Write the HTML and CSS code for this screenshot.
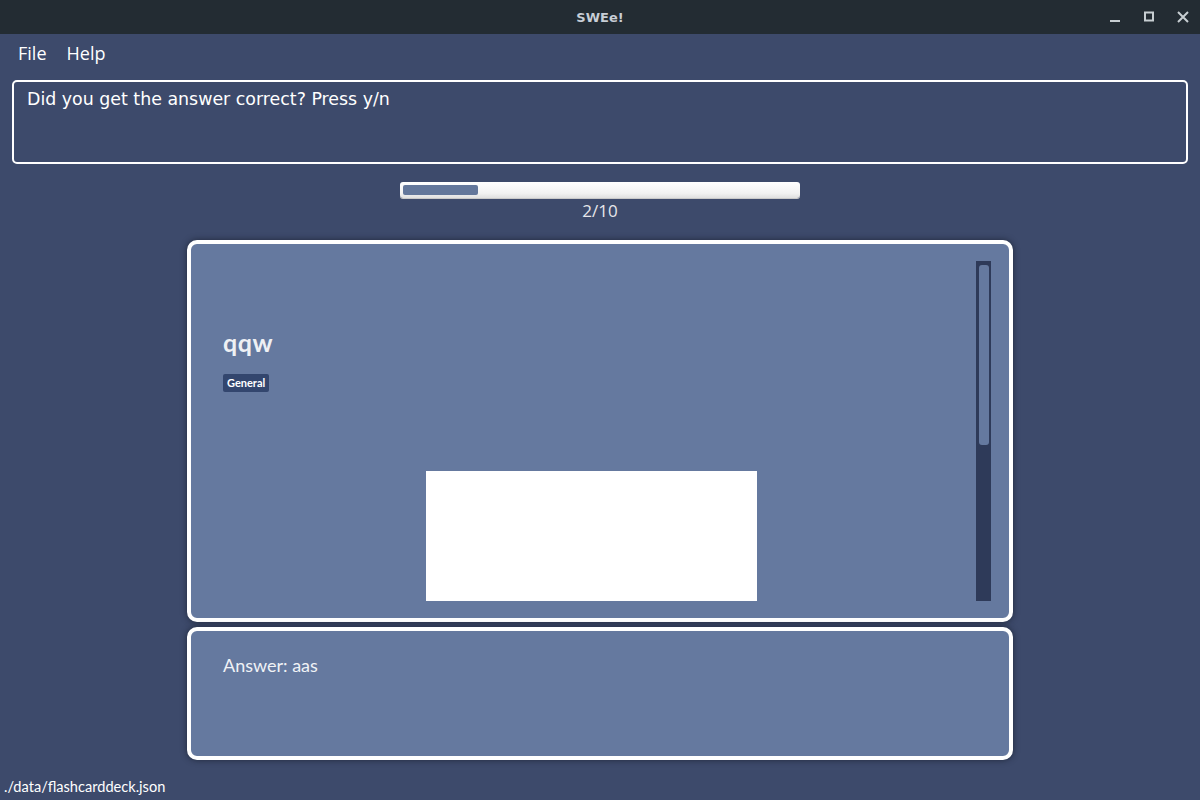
FILE: index.html
```html
<!DOCTYPE html>
<html>
<head>
<meta charset="utf-8">
<link rel="stylesheet" href="styles.css">
</head>
<body>
<div class="window">
  <header class="titlebar">
    <span class="title">SWEe!</span>
    <div class="controls">
      <svg class="ctl" width="14" height="14" viewBox="0 0 14 14"><rect x="2" y="10" width="10" height="2" fill="#c7ced2"/></svg>
      <svg class="ctl" width="14" height="14" viewBox="0 0 14 14"><rect x="3" y="2.5" width="8" height="8" fill="none" stroke="#c7ced2" stroke-width="2"/></svg>
      <svg class="ctl" width="14" height="14" viewBox="0 0 14 14"><path d="M2 2 L12 12 M12 2 L2 12" stroke="#c7ced2" stroke-width="2"/></svg>
    </div>
  </header>
  <nav class="menubar">
    <span class="menu-item">File</span>
    <span class="menu-item">Help</span>
  </nav>
  <div class="command-box">Did you get the answer correct? Press y/n</div>
  <div class="progress-wrap">
    <div class="progress"><div class="progress-fill" style="width: 19%"></div></div>
    <div class="progress-label">2/10</div>
  </div>
  <main class="cards">
    <section class="card question-card">
      <div class="card-content">
        <div class="question">qqw</div>
        <div class="tags"><span class="tag">General</span></div>
        <div class="image-box"></div>
      </div>
      <div class="scrollbar"><div class="thumb"></div></div>
    </section>
    <section class="card answer-card">
      <div class="answer">Answer: aas</div>
    </section>
  </main>
  <footer class="status">./data/flashcarddeck.json</footer>
</div>
</body>
</html>
```
FILE: styles.css
```css
html, body {
  margin: 0;
  padding: 0;
}
body {
  width: 1200px;
  height: 800px;
  overflow: hidden;
  background: #3d4a6b;
}
.window {
  display: flex;
  flex-direction: column;
  height: 800px;
}
.titlebar {
  height: 34px;
  background: #232c33;
  display: flex;
  align-items: center;
  justify-content: center;
  position: relative;
}
.title {
  font-family: "DejaVu Sans", sans-serif;
  font-weight: bold;
  font-size: 13px;
  color: #c7ced6;
}
.controls {
  position: absolute;
  right: 10px;
  top: 10px;
  display: flex;
  gap: 20px;
}
.ctl { display: block; }
.menubar {
  height: 38px;
  display: flex;
  align-items: center;
  padding-left: 18px;
  gap: 20px;
}
.menu-item {
  font-family: "Open Sans", sans-serif;
  font-size: 18px;
  color: #ffffff;
}
.command-box {
  margin: 8px 12px 0;
  height: 84px;
  box-sizing: border-box;
  border: 2px solid #ffffff;
  border-radius: 5px;
  padding: 6px 13px;
  font-family: "DejaVu Sans", sans-serif;
  font-size: 17.4px;
  color: #ffffff;
  line-height: 22px;
}
.progress-wrap {
  margin-top: 18px;
  display: flex;
  flex-direction: column;
  align-items: center;
}
.progress {
  width: 400px;
  height: 16px;
  box-sizing: border-box;
  background: linear-gradient(#ffffff, #f2f2f2 70%, #e0e0e0);
  border-radius: 3px;
  padding: 3px;
  box-shadow: 0 1px 0 #c9c9c9;
}
.progress-fill {
  height: 10px;
  background: #63779b;
  border-radius: 2px;
}
.progress-label {
  margin-top: 4px;
  font-family: "Open Sans", sans-serif;
  font-size: 17px;
  line-height: 18px;
  color: #e6e6ea;
}
.cards {
  margin-top: 20px;
  width: 826px;
  align-self: center;
  display: flex;
  flex-direction: column;
  gap: 5px;
}
.card {
  background: #65799f;
  border: 4px solid #ffffff;
  border-radius: 10px;
  box-shadow: 0 0 6px rgba(20, 25, 40, 0.7);
}
.question-card {
  height: 382px;
  box-sizing: border-box;
  display: flex;
  padding: 17px 18px 17px 32px;
}
.card-content {
  flex: 1;
  display: flex;
  flex-direction: column;
}
.question {
  margin-top: 66px;
  font-family: "Lato", sans-serif;
  font-weight: bold;
  font-size: 25px;
  letter-spacing: 0.6px;
  line-height: 30px;
  color: #eef0f4;
}
.tags {
  margin-top: 17px;
  display: flex;
}
.tag {
  background: #33466e;
  color: #ffffff;
  font-family: "Lato", sans-serif;
  font-weight: bold;
  font-size: 11px;
  line-height: 18px;
  padding: 0 4px;
  border-radius: 2px;
}
.image-box {
  margin-top: auto;
  margin-left: 203px;
  width: 331px;
  height: 130px;
  background: #ffffff;
}
.scrollbar {
  width: 15px;
  background: #2e3a59;
  padding: 4px 2px 0 3px;
  box-sizing: border-box;
}
.thumb {
  height: 180px;
  background: #65799f;
  border-radius: 3px;
}
.answer-card {
  height: 133px;
  box-sizing: border-box;
  padding: 22px 32px;
}
.answer {
  font-family: "Lato", sans-serif;
  font-size: 18px;
  line-height: 24px;
  color: #f0f2f6;
}
.status {
  margin-top: auto;
  height: 26px;
  padding-left: 4px;
  font-family: "Lato", sans-serif;
  font-size: 14.6px;
  line-height: 26px;
  color: #ffffff;
}
```
